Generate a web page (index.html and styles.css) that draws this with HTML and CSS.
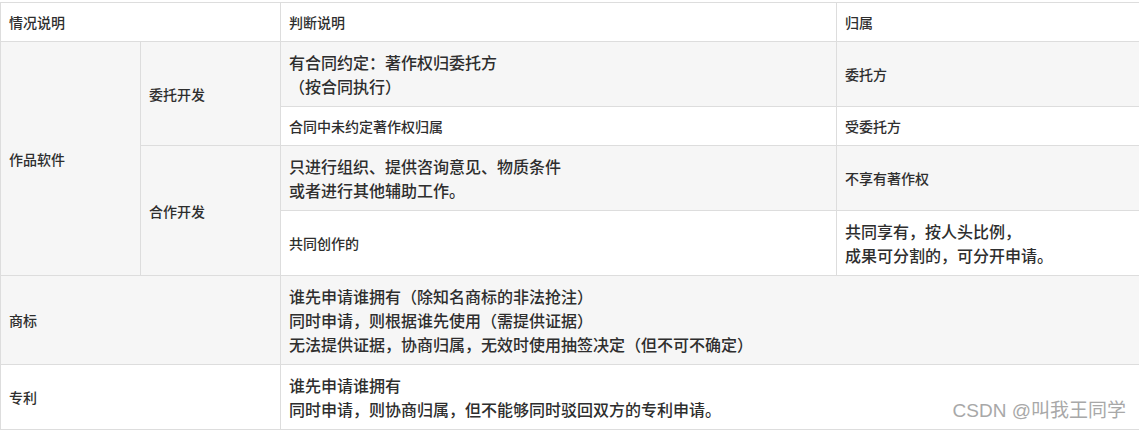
FILE: index.html
```html
<!DOCTYPE html>
<html lang="zh-CN">
<head>
<meta charset="utf-8">
<title>著作权归属</title>
<link rel="stylesheet" href="styles.css">
</head>
<body>
<div class="page">
  <table class="rights">
    <colgroup>
      <col class="c1">
      <col class="c2">
      <col class="c3">
      <col class="c4">
    </colgroup>
    <thead>
      <tr>
        <th colspan="2">情况说明</th>
        <th>判断说明</th>
        <th>归属</th>
      </tr>
    </thead>
    <tbody>
      <tr class="odd">
        <td rowspan="4">作品软件</td>
        <td rowspan="2">委托开发</td>
        <td class="big">有合同约定：著作权归委托方<br>（按合同执行）</td>
        <td>委托方</td>
      </tr>
      <tr>
        <td>合同中未约定著作权归属</td>
        <td>受委托方</td>
      </tr>
      <tr class="odd">
        <td rowspan="2">合作开发</td>
        <td class="big">只进行组织、提供咨询意见、物质条件<br>或者进行其他辅助工作。</td>
        <td>不享有著作权</td>
      </tr>
      <tr>
        <td>共同创作的</td>
        <td class="big">共同享有，按人头比例，<br>成果可分割的，可分开申请。</td>
      </tr>
      <tr class="odd">
        <td colspan="2">商标</td>
        <td colspan="2" class="big">谁先申请谁拥有（除知名商标的非法抢注）<br>同时申请，则根据谁先使用（需提供证据）<br>无法提供证据，协商归属，无效时使用抽签决定（但不可不确定）</td>
      </tr>
      <tr>
        <td colspan="2">专利</td>
        <td colspan="2" class="big">谁先申请谁拥有<br>同时申请，则协商归属，但不能够同时驳回双方的专利申请。</td>
      </tr>
    </tbody>
  </table>
  <div class="watermark">CSDN @叫我王同学</div>
</div>
</body>
</html>
```

FILE: styles.css
```css
html, body {
  margin: 0;
  padding: 0;
  background: #ffffff;
  overflow: hidden;
}

.page {
  position: relative;
  width: 1139px;
  height: 430px;
  padding-top: 2px;
  box-sizing: border-box;
  font-family: "Microsoft YaHei", "Noto Sans CJK SC", "Noto Sans", sans-serif;
  color: #2e2e2e;
}

.rights {
  border-collapse: collapse;
  table-layout: fixed;
  width: 1146px;
  margin-left: 0;
}

.c1 { width: 140px; }
.c2 { width: 140px; }
.c3 { width: 556px; }
.c4 { width: 310px; }

.rights th,
.rights td {
  border: 1px solid #dddddd;
  padding: 8px 8px;
  font-size: 14px;
  line-height: 22px;
  font-weight: 500;
  text-align: left;
  vertical-align: middle;
}

.rights tr.odd td {
  background: #f6f6f6;
}

.rights td.big {
  font-size: 16px;
  line-height: 24px;
}

.watermark {
  position: absolute;
  right: 13px;
  bottom: 7px;
  font-size: 19px;
  line-height: 24px;
  color: #a8a8a8;
  font-family: "Liberation Sans", "Noto Sans CJK SC", sans-serif;
}
```
